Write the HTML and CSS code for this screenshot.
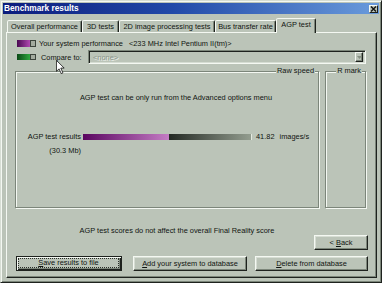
FILE: index.html
```html
<!DOCTYPE html>
<html>
<head>
<meta charset="utf-8">
<title>Benchmark results</title>
<link rel="stylesheet" href="styles.css">
</head>
<body>
<div class="window">
  <div class="titlebar">
    <span class="title">Benchmark results</span>
    <span class="close"><svg width="7" height="6" viewBox="0 0 7 6"><path d="M1 0.5 L6 5.5 M6 0.5 L1 5.5" stroke="#111" stroke-width="1.4"/></svg></span>
  </div>
  <div class="client">
    <div class="tabs">
      <div class="tab t1">Overall performance</div>
      <div class="tab t2">3D tests</div>
      <div class="tab t3">2D image processing tests</div>
      <div class="tab t4">Bus transfer rate</div>
      <div class="tab t5 active">AGP test</div>
    </div>
    <div class="panel">
      <div class="legend row1">
        <span class="swatch purple"><span class="grad"></span><span class="cap"></span></span>
        <span class="legend-text">Your system performance</span>
        <span class="cpu">&lt;233 MHz Intel Pentium II(tm)&gt;</span>
      </div>
      <div class="legend row2">
        <span class="swatch green"><span class="grad"></span><span class="cap"></span></span>
        <span class="cmp-label">Compare to:</span>
        <div class="combo">
          <span class="combo-text">&lt;none&gt;</span>
          <span class="combo-btn"><svg width="5" height="3" viewBox="0 0 5 3"><path d="M0 0 H5 L2.5 3 Z" fill="#858f82"/></svg></span>
        </div>
      </div>
      <div class="groups">
        <div class="group raw">
          <span class="group-title">Raw speed</span>
          <p class="note">AGP test can be only run from the Advanced options menu</p>
          <div class="results">
            <span class="res-label">AGP test results</span>
            <div class="bar"><span class="bar-fill" style="width:86px"></span><span class="bar-rest"></span></div>
            <span class="res-value">41.82<span class="unit">images/s</span></span>
            <span class="res-label">(30.3 Mb)</span>
          </div>
        </div>
        <div class="group rmark">
          <span class="group-title">R mark</span>
        </div>
      </div>
      <p class="footnote">AGP test scores do not affect the overall Final Reality score</p>
      <div class="back-row">
        <button class="btn back"><span>&lt; <u>B</u>ack</span></button>
      </div>
      <div class="actions">
        <button class="btn save default"><span class="focus"><span><u>S</u>ave results to file</span></span></button>
        <button class="btn add"><span><u>A</u>dd your system to database</span></button>
        <button class="btn delete"><span><u>D</u>elete from database</span></button>
      </div>
    </div>
  </div>
  <svg class="cursor" width="9" height="14" viewBox="0 0 12 19"><path d="M0.5 0.5 V15.5 L4 12 L7 18.5 L9.3 17.5 L6.4 11 H11 Z" fill="#fff" stroke="#000" stroke-width="1"/></svg>
</div>
</body>
</html>
```
FILE: styles.css
```css
* { box-sizing: border-box; }
html, body { margin: 0; padding: 0; }
body {
  width: 382px;
  height: 283px;
  overflow: hidden;
  font-family: "Liberation Sans", Arial, sans-serif;
  font-size: 7.4px;
  color: #101410;
  background: #bbc4b8;
}
.window {
  position: relative;
  width: 382px;
  height: 283px;
  background: #bbc4b8;
  border: 1px solid;
  border-color: #d6ddd3 #1e221e #1e221e #d6ddd3;
  box-shadow: inset 1px 1px 0 #f4f8f2, inset -1px -1px 0 #7c867a;
  padding: 2px;
  display: flex;
  flex-direction: column;
}
.titlebar {
  height: 11px;
  flex: none;
  display: flex;
  align-items: center;
  justify-content: space-between;
  padding: 0 1px 0 1px;
  background: linear-gradient(90deg, #0b1c7c 0%, #2149a8 45%, #6a9bdc 100%);
}
.title {
  color: #fff;
  font-weight: bold;
  font-size: 8.3px;
  line-height: 11px;
}
.close {
  width: 9px;
  height: 8px;
  display: flex;
  align-items: center;
  justify-content: center;
  background: #bbc4b8;
  border: 1px solid;
  border-color: #f4f8f2 #1e221e #1e221e #f4f8f2;
}
.client {
  flex: 1;
  display: flex;
  flex-direction: column;
}
.tabs {
  display: flex;
  align-items: flex-end;
  height: 14px;
  margin-top: 4px;
  padding-left: 4px;
  position: relative;
  z-index: 1;
}
.tab {
  height: 12px;
  line-height: 11px;
  text-align: center;
  white-space: nowrap;
  border: 1px solid;
  border-bottom: none;
  border-color: #f4f8f2 #1e221e transparent #f4f8f2;
  box-shadow: inset -1px 0 0 #7c867a;
  border-radius: 2px 2px 0 0;
  background: #bbc4b8;
}
.t1 { width: 75px; }
.t2 { width: 37px; }
.t3 { width: 96px; }
.t4 { width: 61px; }
.t5 { width: 40px; }
.tab.active {
  height: 15px;
  margin-bottom: -1px;
  line-height: 12px;
}
.panel {
  margin-left: 3px;
  width: 371px;
  height: 246px;
  border: 1px solid;
  border-color: #f4f8f2 #1e221e #1e221e #f4f8f2;
  box-shadow: inset -1px -1px 0 #7c867a;
  display: flex;
  flex-direction: column;
}
.legend {
  display: flex;
  align-items: center;
  padding-left: 10px;
  white-space: nowrap;
}
.row1 { height: 13px; margin-top: 4px; }
.row2 { height: 14px; }
.swatch {
  width: 19px;
  display: flex;
}
.purple { height: 7px; }
.green { height: 6px; }
.swatch .grad { flex: 1; }
.purple .grad { background: linear-gradient(90deg, #4a0a52, #b048b0); }
.green .grad { background: linear-gradient(90deg, #0a4a16, #2ea83e); }
.swatch .cap {
  width: 6px;
  background: #a3ab9f;
  border: 1px solid #3c443c;
}
.legend-text { margin-left: 3px; }
.cpu { margin-left: 6px; }
.cmp-label { margin-left: 5px; width: 47px; }
.combo {
  width: 278px;
  height: 14px;
  border: 1px solid;
  border-color: #7c867a #f4f8f2 #f4f8f2 #7c867a;
  box-shadow: inset 1px 1px 0 #1e221e, inset -1px -1px 0 #d6ddd3;
  padding: 2px;
  display: flex;
  align-items: center;
  justify-content: space-between;
}
.combo-text {
  color: #8a948a;
  text-shadow: 1px 1px 0 #eef2ec;
  padding-left: 2px;
}
.combo-btn {
  width: 8px;
  height: 10px;
  display: flex;
  align-items: center;
  justify-content: center;
  border: 1px solid;
  border-color: #f4f8f2 #1e221e #1e221e #f4f8f2;
  box-shadow: inset -1px -1px 0 #7c867a;
}
.groups {
  display: flex;
  height: 144px;
  padding-top: 7px;
  padding-left: 8px;
  gap: 6px;
}
.group {
  border: 1px solid #7c867a;
  box-shadow: inset 1px 1px 0 #f4f8f2, 1px 1px 0 #f4f8f2;
  display: flex;
  flex-direction: column;
}
.raw { width: 304px; }
.rmark { width: 41px; }
.group-title {
  align-self: flex-end;
  margin: -6px 3px 0 0;
  padding: 0 1px;
  background: #bbc4b8;
  line-height: 10px;
  white-space: nowrap;
}
.note {
  margin: 17px 0 0;
  padding-left: 18px;
  text-align: center;
  line-height: 10px;
}
.results {
  display: grid;
  grid-template-columns: 55px 169px auto;
  column-gap: 2px;
  row-gap: 4px;
  align-items: center;
  margin-top: 29px;
  padding-left: 10px;
  line-height: 10px;
}
.res-label { text-align: right; white-space: nowrap; }
.bar { height: 6px; display: flex; }
.bar-fill { background: linear-gradient(90deg, #5a0660, #c47cc4); }
.bar-rest {
  flex: 1;
  background: linear-gradient(90deg, #232923, #939d8f);
  border-right: 1px solid #e4eae0;
}
.res-value { padding-left: 2px; white-space: nowrap; }
.unit { margin-left: 5px; }
.footnote {
  margin: 18px 0 0;
  padding-right: 29px;
  text-align: center;
  line-height: 9px;
}
.back-row {
  display: flex;
  justify-content: flex-end;
  padding-right: 8px;
}
.btn {
  appearance: none;
  -webkit-appearance: none;
  margin: 0;
  height: 15px;
  padding: 0;
  font: inherit;
  color: inherit;
  background: #bbc4b8;
  border: 1px solid;
  border-color: #f4f8f2 #1e221e #1e221e #f4f8f2;
  box-shadow: inset -1px -1px 0 #7c867a, inset 1px 1px 0 #d6ddd3;
  display: flex;
  align-items: center;
  justify-content: center;
  line-height: 10px;
  white-space: nowrap;
}
.back { width: 54px; }
.actions {
  display: flex;
  margin-top: 6px;
  padding-left: 9px;
}
.save { width: 106px; }
.add { width: 114px; margin-left: 11px; }
.delete { width: 113px; margin-left: 8px; }
.btn.default {
  border-color: #1e221e;
  box-shadow: inset 1px 1px 0 #f4f8f2, inset -1px -1px 0 #1e221e, inset -2px -2px 0 #7c867a;
  padding: 1px 2px 2px 1px;
}
.focus {
  flex: 1;
  align-self: stretch;
  display: flex;
  align-items: center;
  justify-content: center;
  line-height: 8px;
  border: 1px dotted #2a2e2a;
}
.cursor {
  position: absolute;
  left: 55px;
  top: 59px;
}
```
